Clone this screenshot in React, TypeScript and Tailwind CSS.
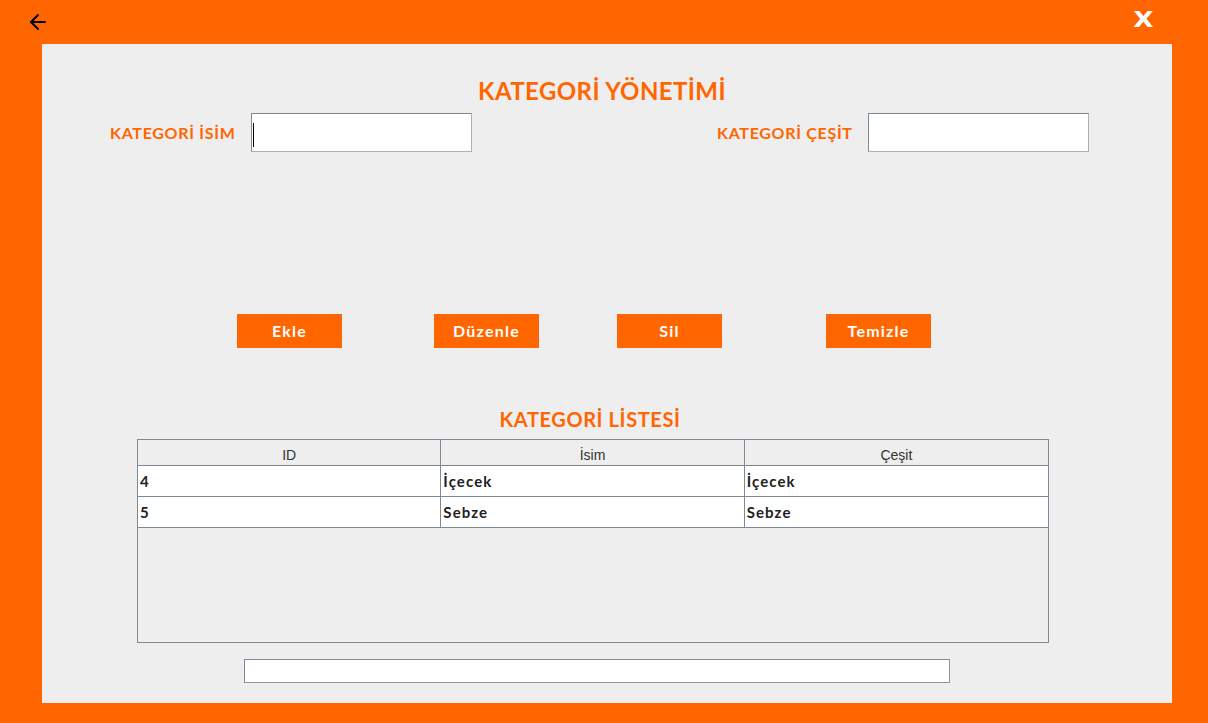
import { ArrowLeft } from "lucide-react";

const ROWS = [
  { id: "4", isim: "İçecek", cesit: "İçecek" },
  { id: "5", isim: "Sebze", cesit: "Sebze" },
];

const BUTTONS = [
  { label: "Ekle", ml: "ml-[195px]" },
  { label: "Düzenle", ml: "ml-[92px]" },
  { label: "Sil", ml: "ml-[78px]" },
  { label: "Temizle", ml: "ml-[104px]" },
];

const font = { fontFamily: "Lato, 'Noto Sans', sans-serif" };

export default function App() {
  return (
    <div className="h-[723px] w-[1208px] bg-[#ff6600] flex flex-col" style={font}>
      {/* top bar */}
      <div className="h-[44px] flex items-start justify-between pl-[26px] pr-[56px]">
        <ArrowLeft className="mt-[10px] h-[24px] w-[24px] text-black" strokeWidth={2} />
        <span
          className="mt-[7px] text-[22px] leading-[26px] font-bold text-white scale-x-[1.2]"
          style={{ fontFamily: "'DejaVu Sans', sans-serif" }}
        >
          X
        </span>
      </div>

      <div className="ml-[42px] w-[1130px] h-[659px] bg-[#eeeeee] flex flex-col">
        <h1 className="pt-[33px] pr-[10px] text-center text-[24px] leading-[28px] font-bold text-[#ff6600] tracking-[0.4px]">
          KATEGORİ YÖNETİMİ
        </h1>

        <div className="mt-[8px] flex items-center pl-[68px]">
          <span className="w-[141px] text-[16px] font-bold text-[#ff6600] tracking-[0.7px]">
            KATEGORİ İSİM
          </span>
          <div className="relative w-[221px] h-[39px] bg-white border border-[#7d8a96] border-r-[#a9b3bc] border-b-[#a9b3bc]">
            <div className="absolute left-[1px] top-[9px] h-[24px] w-px bg-black" />
          </div>
          <span className="ml-[245px] w-[151px] text-[16px] font-bold text-[#ff6600] tracking-[0.7px]">
            KATEGORİ ÇEŞİT
          </span>
          <div className="w-[221px] h-[39px] bg-white border border-[#7d8a96] border-r-[#a9b3bc] border-b-[#a9b3bc]" />
        </div>

        <div className="mt-[162px] flex">
          {BUTTONS.map((b) => (
            <button
              key={b.label}
              type="button"
              className={`${b.ml} w-[105px] h-[34px] bg-[#ff6600] text-white text-[16px] font-bold tracking-[1.2px]`}
            >
              {b.label}
            </button>
          ))}
        </div>

        <div className="ml-[95px] w-[912px] flex flex-col">
          <h2 className="mt-[59px] pr-[6px] text-center text-[20px] leading-[24px] font-bold text-[#ff6600] tracking-[0.6px]">
            KATEGORİ LİSTESİ
          </h2>

          <div className="mt-[8px] h-[204px] border border-[#7d8a96] flex flex-col">
            <div
              className="grid grid-cols-3 h-[26px] border-b border-[#7d8a96] text-[14px] text-[#333333]"
              style={{ fontFamily: "'Liberation Sans', Arial, sans-serif" }}
            >
              <div className="flex items-center justify-center pt-[5px] border-r border-[#7d8a96]">ID</div>
              <div className="flex items-center justify-center pt-[5px] border-r border-[#7d8a96]">İsim</div>
              <div className="flex items-center justify-center pt-[5px]">Çeşit</div>
            </div>
            {ROWS.map((r) => (
              <div
                key={r.id}
                className="grid grid-cols-3 h-[31px] bg-white border-b border-[#7d8a96] text-[15px] font-bold text-[#222222] tracking-[1.1px]"
              >
                <div className="flex items-center pl-[2px] border-r border-[#7d8a96]">{r.id}</div>
                <div className="flex items-center pl-[2px] border-r border-[#7d8a96]">{r.isim}</div>
                <div className="flex items-center pl-[2px]">{r.cesit}</div>
              </div>
            ))}
          </div>
        </div>

        <div className="mt-[16px] ml-[202px] w-[706px] h-[24px] bg-white border border-[#7d8a96] border-r-[#8a96a0] border-b-[#8a96a0]" />
      </div>
    </div>
  );
}
